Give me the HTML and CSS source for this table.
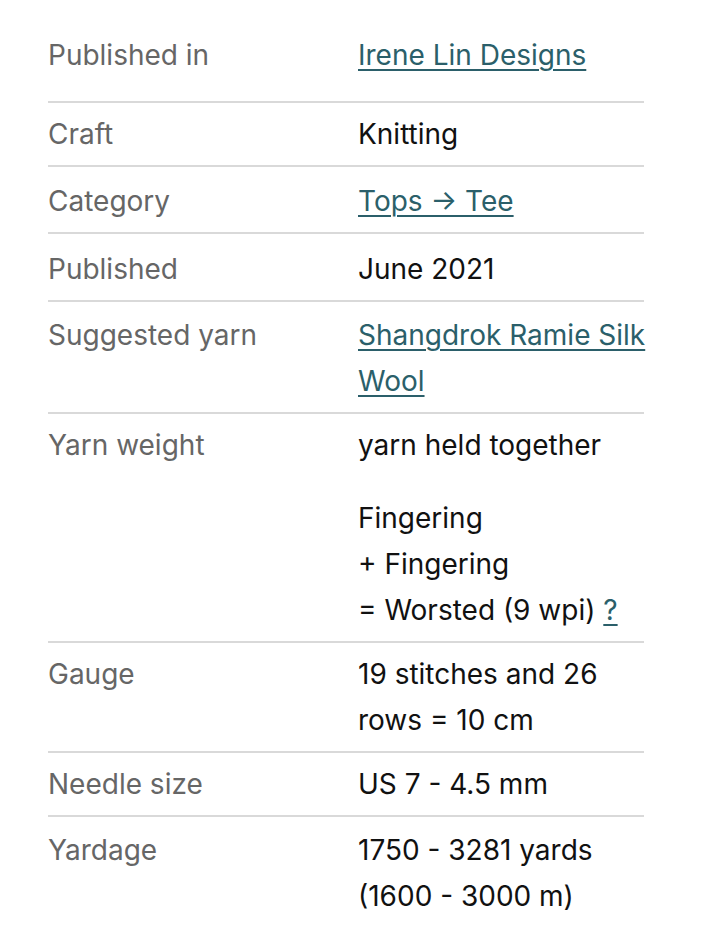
FILE: index.html
```html
<!DOCTYPE html>
<html lang="en">
<head>
<meta charset="utf-8">
<title>Pattern details</title>
<link rel="stylesheet" href="styles.css">
</head>
<body>
<div class="details">
  <div class="row row-first">
    <div class="label">Published in</div>
    <div class="value"><a href="#">Irene Lin Designs</a></div>
  </div>
  <div class="row">
    <div class="label">Craft</div>
    <div class="value">Knitting</div>
  </div>
  <div class="row pad-11">
    <div class="label">Category</div>
    <div class="value"><a href="#">Tops → Tee</a></div>
  </div>
  <div class="row pad-12">
    <div class="label">Published</div>
    <div class="value">June 2021</div>
  </div>
  <div class="row pad-10">
    <div class="label">Suggested yarn</div>
    <div class="value"><a href="#">Shangdrok Ramie Silk Wool</a></div>
  </div>
  <div class="row">
    <div class="label">Yarn weight</div>
    <div class="value">
      <p class="held">yarn held together</p>
      <p class="weights">Fingering<br>+ Fingering<br>= Worsted (9 wpi) <a href="#">?</a></p>
    </div>
  </div>
  <div class="row">
    <div class="label">Gauge</div>
    <div class="value">19 stitches and 26 rows = 10 cm</div>
  </div>
  <div class="row">
    <div class="label">Needle size</div>
    <div class="value">US 7 - 4.5 mm</div>
  </div>
  <div class="row pad-10">
    <div class="label">Yardage</div>
    <div class="value">1750 - 3281 yards<br>(1600 - 3000 m)</div>
  </div>
</div>
</body>
</html>
```
FILE: styles.css
```css
html, body {
  margin: 0;
  padding: 0;
  background: #ffffff;
}

body {
  font-family: Inter, "Noto Sans", sans-serif;
  font-size: 28px;
  line-height: 46px;
  color: #111111;
}

.details {
  width: 596px;
  margin-left: 48px;
}

.row {
  display: flex;
  padding: 8px 0;
  border-bottom: 2px solid #d9d9d9;
}

.row-first {
  padding-top: 32px;
  padding-bottom: 23px;
}

.pad-10 { padding-top: 10px; }
.pad-11 { padding-top: 11px; }
.pad-12 { padding-top: 12px; }

.label {
  width: 310px;
  flex: none;
  color: #666666;
}

.value {
  flex: 1;
  min-width: 0;
  margin-right: -6px;
}

.value a {
  color: #2b5f6a;
  text-decoration: underline;
  text-decoration-thickness: 2px;
  text-underline-offset: 4px;
}

.value p {
  margin: 0;
}

.held {
  margin-bottom: 27px !important;
}
```
